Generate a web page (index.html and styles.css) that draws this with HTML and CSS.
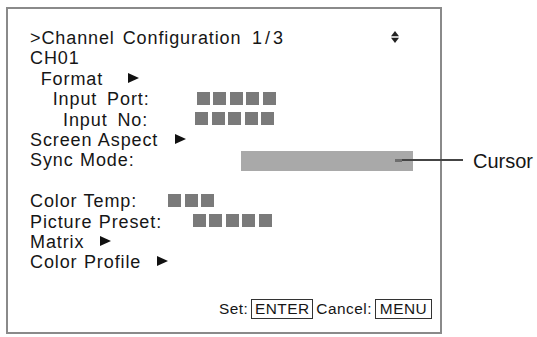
FILE: index.html
```html
<!DOCTYPE html>
<html>
<head>
<meta charset="utf-8">
<link rel="stylesheet" href="styles.css">
</head>
<body>
<div class="page">
  <div class="panel">
    <div class="line title">
      <span class="title-text">&gt;Channel Configuration</span><span class="page-no">1/3</span>
      <svg class="updown" width="8" height="12" viewBox="0 0 8 12"><polygon points="4,0 8,5.3 0,5.3" fill="#222"/><polygon points="0,6.7 8,6.7 4,12" fill="#222"/></svg>
    </div>
    <div class="line">CH01</div>
    <div class="line ind1"><span class="lbl w-format">Format</span><svg class="tri" width="11" height="10" viewBox="0 0 11 10"><polygon points="0,0 11,5 0,10" fill="#111"/></svg></div>
    <div class="line ind2"><span class="lbl w-port">Input Port:</span><span class="blocks"><i></i><i></i><i></i><i></i><i></i></span></div>
    <div class="line ind3"><span class="lbl w-no">Input No:</span><span class="blocks"><i></i><i></i><i></i><i></i><i></i></span></div>
    <div class="line"><span class="lbl w-aspect">Screen Aspect</span><svg class="tri" width="11" height="10" viewBox="0 0 11 10"><polygon points="0,0 11,5 0,10" fill="#111"/></svg></div>
    <div class="line"><span class="lbl w-sync">Sync Mode:</span><span class="cursor-bar"></span></div>
    <div class="line"></div>
    <div class="line"><span class="lbl w-temp">Color Temp:</span><span class="blocks"><i></i><i></i><i></i></span></div>
    <div class="line"><span class="lbl w-preset">Picture Preset:</span><span class="blocks"><i></i><i></i><i></i><i></i><i></i></span></div>
    <div class="line"><span class="lbl w-matrix">Matrix</span><svg class="tri" width="11" height="10" viewBox="0 0 11 10"><polygon points="0,0 11,5 0,10" fill="#111"/></svg></div>
    <div class="line"><span class="lbl w-profile">Color Profile</span><svg class="tri" width="11" height="10" viewBox="0 0 11 10"><polygon points="0,0 11,5 0,10" fill="#111"/></svg></div>
    <div class="footer">
      <span class="ft">Set:</span><span class="key key-enter">ENTER</span><span class="ft">Cancel:</span><span class="key key-menu">MENU</span>
    </div>
  </div>
  <div class="callout"><span class="dot"></span><span class="leader"></span><span class="callout-text">Cursor</span></div>
</div>
</body>
</html>
```

FILE: styles.css
```css
html, body {
  margin: 0;
  padding: 0;
  background: #fff;
}
.page {
  position: relative;
  width: 537px;
  height: 337px;
  overflow: hidden;
  font-family: "Liberation Sans", Arial, sans-serif;
  color: #161616;
}
.panel {
  box-sizing: border-box;
  margin: 7px 0 0 6px;
  width: 436px;
  height: 327px;
  border: 2px solid #8a8a8a;
  padding: 19px 8px 0 22px;
  display: flex;
  flex-direction: column;
}
.line {
  height: 20.4px;
  line-height: 20.4px;
  font-size: 18px;
  letter-spacing: 0.9px;
  word-spacing: 0.5px;
  white-space: nowrap;
  display: flex;
  align-items: center;
}
.title-text { display: inline-block; width: 222px; word-spacing: 2px; }
.page-no { letter-spacing: 3px; }
.updown {
  margin-left: auto;
  margin-right: 33px;
  margin-top: -2px;
}
.ind1 { padding-left: 10.7px; }
.ind2 { padding-left: 22.7px; word-spacing: 4px; }
.ind3 { padding-left: 33px; word-spacing: 4px; }
.lbl { display: inline-block; }
.w-format { width: 87.3px; }
.w-port { width: 144px; }
.w-no { width: 132px; }
.w-aspect { width: 145px; }
.w-sync { width: 211px; }
.w-temp { width: 138px; }
.w-preset { width: 162.7px; }
.w-matrix { width: 70px; }
.w-profile { width: 127px; }
.tri { margin-top: -2px; }
.blocks {
  display: flex;
  gap: 3.6px;
  margin-top: -2px;
}
.blocks i {
  display: block;
  width: 13px;
  height: 13px;
  background: #7a7a7a;
}
.cursor-bar {
  display: block;
  width: 172px;
  height: 20px;
  background: #a9a9a9;
}
.footer {
  margin-top: auto;
  margin-bottom: 13px;
  display: flex;
  justify-content: flex-end;
  align-items: center;
  font-size: 15.4px;
  letter-spacing: 0.5px;
  height: 20px;
  line-height: 18px;
}
.key {
  box-sizing: border-box;
  border: 1.5px solid #333;
  height: 20px;
  display: flex;
  align-items: center;
  justify-content: center;
  margin-left: 3px;
  margin-right: 3px;
}
.key-enter { width: 62px; }
.key-menu { width: 57px; margin-right: 0; }
.callout {
  position: absolute;
  left: 395px;
  top: 150px;
  height: 20px;
  display: flex;
  align-items: center;
}
.dot {
  display: block;
  width: 7px;
  height: 3px;
  background: #6e6e6e;
}
.leader {
  display: block;
  width: 61px;
  height: 1.5px;
  background: #444;
}
.callout-text {
  margin-left: 10px;
  font-size: 20px;
  margin-top: 3px;
}
```
